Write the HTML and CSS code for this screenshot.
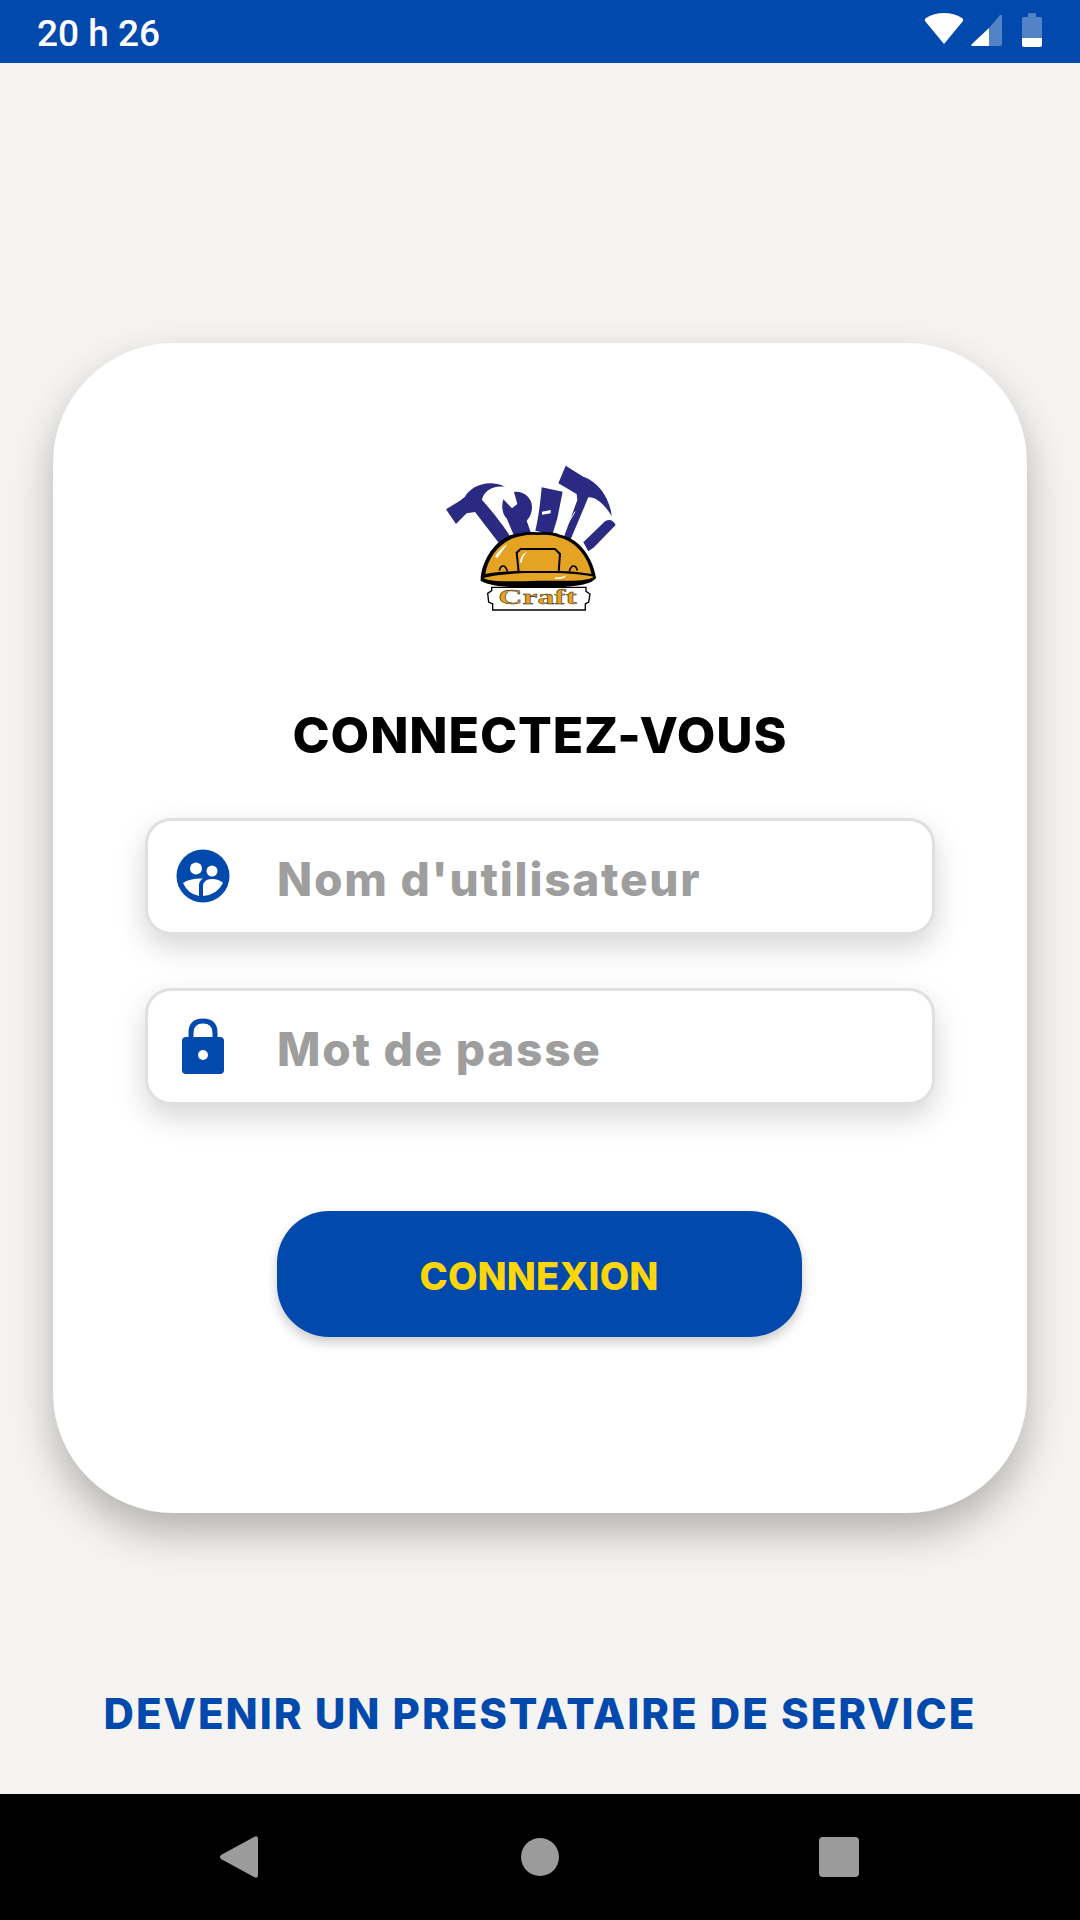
FILE: index.html
```html
<!DOCTYPE html>
<html lang="fr">
<head>
  <meta charset="UTF-8">
  <meta name="viewport" content="width=device-width, initial-scale=1.0">
  <title>Connexion</title>
  <link rel="stylesheet" href="styles.css">
</head>
<body>
  <header class="status-bar">
    <span class="clock">20 h 26</span>
    <div class="status-icons">
      <svg class="wifi" width="40" height="31" viewBox="0 0 40 31">
        <path d="M20 31 L1 8 Q0 6 2 5 Q10 0 20 0 Q30 0 38 5 Q40 6 39 8 Z" fill="#fff"/>
      </svg>
      <svg class="signal" width="31" height="31" viewBox="0 0 31 31">
        <path d="M31 1 L31 29 Q31 31 29 31 L18 31 L18 13 L29 0 Q31 -1 31 1 Z" fill="#fff" fill-opacity=".32"/>
        <path d="M18 13 L18 31 L1 31 Q0 31 0.5 29.500 Z" fill="#fff"/>
      </svg>
      <svg class="battery" width="20" height="34" viewBox="0 0 20 34">
        <path d="M6 0 H14 V4 H18 Q20 4 20 6 V25 H0 V6 Q0 4 2 4 H6 Z" fill="#fff" fill-opacity=".32"/>
        <path d="M0 25 H20 V32 Q20 34 18 34 H2 Q0 34 0 32 Z" fill="#fff"/>
      </svg>
    </div>
  </header>

  <main class="screen">
    <section class="card">
      <svg class="logo" width="220" height="170" viewBox="0 0 660 510">
        <!-- outils -->
        <g fill="#2b2a82">
          <path d="M78 178 L120 152 L135 140 C150 112 200 85 255 110 C215 106 190 125 186 150 C205 170 250 225 272 262 L236 278 L165 186 L140 190 L108 222 Z"/>
          <path d="M250 148 L276 175 L292 162 L282 126 C312 122 338 145 336 175 C334 195 327 205 320 212 L334 252 L285 264 L260 205 C248 195 243 170 250 148 Z"/>
          <path d="M365 112 L428 125 L412 205 L397 254 L346 242 C356 200 362 150 365 112 Z"/>
          <path d="M415 100 L437 47 L490 80 C535 95 570 145 575 198 C552 160 525 140 505 142 L452 268 L432 260 L472 150 L470 132 Z"/>
          <path d="M490 277 L555 214 Q575 202 587 225 L522 292 L505 304 Z"/>
        </g>
        <path d="M366 185 L392 180 L392 190 L366 194 Z" fill="#fff"/>
        <path d="M422 258 L465 185" stroke="#fff" stroke-width="3"/>
        <!-- casque -->
        <path d="M182 384 C190 310 245 252 300 250 Q320 244 355 247 Q400 244 420 254 C470 262 518 315 528 384 C515 402 480 412 355 414 C235 414 198 402 182 392 Z" fill="#000"/>
        <path d="M196 372 C205 315 250 265 305 258 Q330 252 355 255 Q395 252 415 262 C465 272 505 320 514 372 C440 358 270 358 196 372 Z" fill="#e5a323"/>
        <path d="M190 384 C270 364 440 364 522 380 C500 396 430 392 355 392 C290 394 215 398 190 384 Z" fill="#e5a323"/>
        <path d="M290 308 L302 297 L405 297 L420 312 L416 366 L296 366 Z" fill="#e5a323" stroke="#000" stroke-width="6"/>
        <path d="M238 362 C242 344 256 342 262 364 M472 362 C468 344 454 342 448 364" fill="none" stroke="#000" stroke-width="5"/>
        <path d="M300 335 Q302 312 322 306 Q306 318 306 340 Z M405 382 Q425 384 440 376 Q430 390 405 386 Z M225 320 Q240 295 262 282 Q246 305 232 324 Z" fill="#fff"/>
        <!-- etiquette -->
        <path d="M215 412 H498 V424 L510 432 L506 456 L496 462 V480 H218 V462 L206 456 L203 430 L215 422 Z" fill="#fff" stroke="#000" stroke-width="4"/>
        <text class="logo-text" x="235" y="462" textLength="235" lengthAdjust="spacingAndGlyphs">Craft</text>
      </svg>

      <h1 class="title">CONNECTEZ-VOUS</h1>

      <div class="field">
        <svg class="field-icon" width="54" height="54" viewBox="0 0 54 54">
          <circle cx="27" cy="27" r="26.500" fill="#0249ad"/>
          <circle cx="20" cy="19.500" r="6" fill="#fff"/>
          <circle cx="36" cy="22" r="5.500" fill="#fff"/>
          <path d="M7 34 Q14 29 27 29.500 Q23 32 23 36 L23 47 Q12 45 7 34 Z" fill="#fff"/>
          <path d="M27 47 L27 38 Q27 30 36 30 Q43 30 47 34 Q41 46 27 47 Z" fill="#fff"/>
        </svg>
        <span class="field-label">Nom d'utilisateur</span>
      </div>

      <div class="field">
        <svg class="field-icon" width="54" height="56" viewBox="0 0 54 56">
          <path d="M15 22 V15 Q15 3 27 3 Q39 3 39 15 V22" fill="none" stroke="#0249ad" stroke-width="5"/>
          <rect x="6" y="19" width="42" height="37" rx="4" fill="#0249ad"/>
          <circle cx="27" cy="37" r="5" fill="#fff"/>
        </svg>
        <span class="field-label">Mot de passe</span>
      </div>

      <button class="login-btn">CONNEXION</button>
    </section>

    <a class="provider-link" href="#">DEVENIR UN PRESTATAIRE DE SERVICE</a>
  </main>

  <footer class="nav-bar">
    <svg width="38" height="42" viewBox="0 0 38 42"><path d="M1 19 L34 1 Q38 -1 38 3 V39 Q38 43 34 41 L1 23 Q-1 21 1 19 Z" fill="#9b9b9b"/></svg>
    <span class="nav-home"></span>
    <span class="nav-recent"></span>
  </footer>
</body>
</html>
```

FILE: styles.css
```css
* {
  box-sizing: border-box;
}
body {
  margin: 0;
  width: 1080px;
  height: 1920px;
  display: flex;
  flex-direction: column;
  background: #f5f4f2;
  font-family: Inter, "Noto Sans", sans-serif;
  overflow: hidden;
}
.status-bar {
  height: 63px;
  background: #0249ad;
  display: flex;
  align-items: center;
  justify-content: space-between;
  padding: 0 38px 0 37px;
  color: #fff;
}
.clock {
  font-family: Roboto, sans-serif;
  font-weight: 500;
  font-size: 37px;
  padding-top: 4px;
}
.status-icons {
  display: flex;
  align-items: flex-start;
  padding-bottom: 3px;
}
.wifi {
  margin-right: 7px;
}
.signal {
  margin-top: 2px;
  margin-right: 20px;
}
.screen {
  flex: 1;
  display: flex;
  flex-direction: column;
  align-items: center;
  padding-top: 280px;
}
.card {
  width: 974px;
  height: 1170px;
  background: #fff;
  border-radius: 120px;
  box-shadow: 0 20px 40px rgba(60, 55, 50, 0.35);
  display: flex;
  flex-direction: column;
  align-items: center;
  padding-top: 107px;
}
.logo {
  margin-left: -20px;
}
.logo-text {
  font-family: "Liberation Serif", serif;
  font-weight: 700;
  font-size: 60px;
  fill: #e5a323;
  stroke: #000;
  stroke-width: 1;
}
.title {
  margin: 85px 0 0;
  height: 60px;
  line-height: 60px;
  font-size: 50px;
  font-weight: 800;
  letter-spacing: 0.9px;
  color: #000;
}
.field {
  width: 790px;
  height: 117px;
  margin-top: 53px;
  background: #fff;
  border: 3px solid #e0e0e0;
  border-radius: 26px;
  box-shadow: 0 12px 30px rgba(0, 0, 0, 0.17);
  display: flex;
  align-items: center;
  padding-left: 28px;
}
.field-icon {
  flex: none;
  margin-bottom: 2px;
}
.field-label {
  margin-left: 47px;
  padding-top: 4px;
  font-size: 46px;
  font-weight: 800;
  letter-spacing: 1.75px;
  color: #9e9e9e;
}
.login-btn {
  width: 525px;
  height: 126px;
  margin-top: 106px;
  margin-right: 2px;
  padding-top: 5px;
  border: 0;
  border-radius: 52px;
  background: #0249ad;
  color: #ffd60a;
  font-family: inherit;
  font-size: 38px;
  font-weight: 800;
  letter-spacing: 0.2px;
  box-shadow: 0 6px 12px rgba(0, 0, 0, 0.2);
}
.provider-link {
  margin-top: 175px;
  color: #0249ad;
  font-size: 42px;
  font-weight: 800;
  letter-spacing: 2px;
  text-decoration: none;
}
.nav-bar {
  height: 126px;
  background: #000;
  display: flex;
  align-items: center;
  justify-content: center;
  gap: 260px;
  padding-right: 2px;
}
.nav-home {
  width: 38px;
  height: 38px;
  margin-left: 3px;
  border-radius: 50%;
  background: #9b9b9b;
}
.nav-recent {
  width: 40px;
  height: 40px;
  border-radius: 4px;
  background: #9b9b9b;
}
```
